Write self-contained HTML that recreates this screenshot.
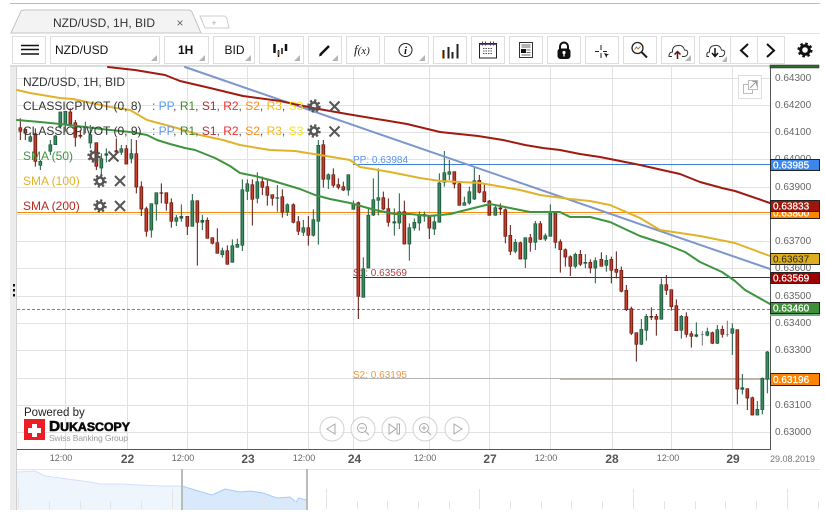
<!DOCTYPE html>
<html><head><meta charset="utf-8"><style>
html,body{margin:0;padding:0;background:#fff;overflow:hidden}
svg{display:block;font-family:"Liberation Sans",sans-serif}
</style></head><body>
<svg width="825" height="514" viewBox="0 0 825 514" xmlns="http://www.w3.org/2000/svg">
<rect width="825" height="514" fill="#fff"/>
<rect x="10" y="3" width="810" height="1" fill="#bbb"/>
<!-- tabs -->
<path d="M201 33.500H820" stroke="#e2e2e2"/>
<path d="M11 33L21 11Q22 10 25 10H188Q191 10 192 12L201 33Z" fill="#f3f3f3" stroke="#c4c4c4"/>
<path d="M200 16H224Q226 16 227 19L229 28H205Z" fill="#fff" stroke="#ccc"/>
<text x="214" y="26" font-size="9" fill="#aaa" text-anchor="middle">+</text>
<text x="53" y="27" font-size="12" fill="#333">NZD/USD, 1H, BID</text>
<text x="180" y="27" font-size="12" fill="#666" text-anchor="middle">×</text>
<!-- toolbar buttons -->
<g fill="#fff" stroke="#dedede">
<rect x="12.5" y="36.5" width="33" height="27"/><rect x="50.5" y="36.5" width="109" height="27"/><rect x="164.5" y="36.5" width="44" height="27"/><rect x="213.5" y="36.5" width="41" height="27"/><rect x="259.5" y="36.5" width="44" height="27"/><rect x="308.5" y="36.5" width="33" height="27"/><rect x="346.5" y="36.5" width="33" height="27"/><rect x="384.5" y="36.5" width="44" height="27"/><rect x="433.5" y="36.5" width="33" height="27"/><rect x="471.5" y="36.5" width="33" height="27"/><rect x="509.5" y="36.5" width="33" height="27"/><rect x="547.5" y="36.5" width="33" height="27"/><rect x="585.5" y="36.5" width="33" height="27"/><rect x="623.5" y="36.5" width="33" height="27"/><rect x="661.5" y="36.5" width="33" height="27"/><rect x="699.5" y="36.5" width="33" height="27"/><rect x="730.5" y="36.5" width="27" height="27"/><rect x="757.5" y="36.5" width="27" height="27"/>
</g>
<g fill="#b5b5b5">
<path d="M157 55v6h-6z"/><path d="M205 55v6h-6z"/><path d="M251 55v6h-6z"/><path d="M300 55v6h-6z"/><path d="M338 55v6h-6z"/><path d="M425 55v6h-6z"/><path d="M691 55v6h-6z"/><path d="M727 56v6h-5z"/>
</g>
<path d="M21 45.500H39M21 49.500H39M21 54H39" stroke="#111" stroke-width="1.600"/>
<text x="55" y="54" font-size="12" fill="#111">NZD/USD</text>
<text x="178" y="54" font-size="12" font-weight="bold" fill="#111">1H</text>
<text x="224.500" y="54" font-size="12" fill="#111">BID</text>
<!-- candle icon -->
<g stroke="#111"><path d="M274.500 44V53" stroke-width="2.500"/><path d="M278.500 50V57" stroke-width="1.500"/><path d="M278.500 51V55" stroke-width="2" stroke="#7a4a20"/><path d="M282 48V54" stroke-width="1.500"/><path d="M286 44V51" stroke-width="2.500"/></g>
<!-- pencil -->
<path d="M320 55L329 46" stroke="#111" stroke-width="2.500"/><path d="M319 56.500L320 53.500L322 55.500Z" fill="#111"/>
<text x="354" y="54" font-size="13" font-family="Liberation Serif,serif" font-style="italic" fill="#222">f<tspan font-size="11">(x)</tspan></text>
<!-- info -->
<circle cx="405.500" cy="50" r="6.500" fill="none" stroke="#222"/><text x="405.500" y="54" font-size="11" font-family="Liberation Serif,serif" font-style="italic" font-weight="bold" fill="#111" text-anchor="middle">i</text>
<!-- bars -->
<path d="M443.500 58.500V50M448.500 58.500V47M452.500 58.500V52M457.500 58.500V44" stroke="#222" stroke-width="2"/><path d="M442.500 58.500V52" stroke="#c07a20"/>
<!-- calendar -->
<rect x="479.500" y="43.500" width="17" height="14.500" fill="#fff" stroke="#222"/><path d="M480 44H496" stroke="#3a1a70" stroke-width="1.500"/><path d="M482.500 41.500v4M485.500 41.500v4M490.500 41.500v4M493.500 41.500v4" stroke="#444"/><path d="M483 48.500h10M483 51h10M483 53.500h10" stroke="#555" stroke-dasharray="1.500 1"/>
<!-- news -->
<rect x="519.500" y="42.500" width="13" height="15" fill="#fff" stroke="#333"/><path d="M521.500 45h9M521.500 47h9M526.500 50h4M526.500 52.500h4M521.500 55h9" stroke="#666"/><rect x="521" y="49" width="5" height="4" fill="#111"/>
<!-- lock -->
<path d="M560 49V46.500A4 4 0 0 1 568 46.500V49" fill="none" stroke="#111" stroke-width="2"/><rect x="557.500" y="48.500" width="13" height="10.500" rx="3" fill="#111"/><circle cx="564" cy="52.500" r="1.600" fill="#fff"/><path d="M564 53V56.500" stroke="#fff" stroke-width="1.300"/>
<!-- crosshair -->
<path d="M601 45V50M601 53V58M595 51.500H599M603 51.500H607" stroke="#222"/><path d="M604 53L609 54.500L607 55.500L606.500 58Z" fill="#222"/>
<!-- zoom chart -->
<circle cx="637.500" cy="48" r="5.500" fill="#fff" stroke="#222" stroke-width="1.300"/><path d="M634.500 49.500L636.500 47L638 49L640.500 46.500" stroke="#b5651d" fill="none" stroke-width=".9"/><path d="M641.500 52L647 57.500" stroke="#222" stroke-width="2"/>
<!-- clouds -->
<g fill="#fff" stroke="#333"><path d="M672 56.500H669Q669 52 672.500 52Q672 46 678 45.500Q683 44.500 684.500 50Q688.500 50 687.500 54Q686.500 56.500 684 56.500H682"/><path d="M709 56.500H707Q706 52 709.500 52Q709 46 715 45.500Q720 44.500 721.500 50Q725.500 50 724.500 54Q723.500 56.500 721 56.500H719"/></g>
<path d="M677.500 59V52M674.500 54.500L677.500 51.500L680.500 54.500" stroke="#601010" stroke-width="1.500" fill="none"/>
<path d="M715 48V56M712 53L715 56.500L718 53" stroke="#111" stroke-width="1.500" fill="none"/>
<!-- arrows -->
<path d="M748 44L741 50.500L748 57" fill="none" stroke="#111" stroke-width="2"/>
<path d="M767 44L774 50.500L767 57" fill="none" stroke="#111" stroke-width="2"/>
<!-- gear -->
<circle cx="805" cy="50" r="4.300" fill="none" stroke="#111" stroke-width="3"/><circle cx="805" cy="50" r="6.300" fill="none" stroke="#111" stroke-width="2.500" stroke-dasharray="2.500 2.450"/>

<!-- chart frame -->
<rect x="10" y="66" width="7" height="444" fill="#ececec"/>
<rect x="16" y="66" width="1" height="444" fill="#d0d0d0"/>
<rect x="10" y="65" width="760" height="2" fill="#dcdcdc"/>
<rect x="13" y="284" width="2" height="2.500" fill="#111"/><rect x="13" y="289" width="2" height="2.500" fill="#111"/><rect x="13" y="294" width="2" height="2.500" fill="#111"/>
<!-- grid -->
<g stroke="#e2e2e2" fill="none">
<path d="M17 78.500H770M17 105.500H770M17 132.500H770M17 159.500H770M17 187.500H770M17 214.500H770M17 241.500H770M17 268.500H770M17 296.500H770M17 323.500H770M17 350.500H770M17 378.500H770M17 405.500H770M17 432.500H770"/>
<path d="M65.500 67V449M127.500 67V449M187.500 67V449M247.500 67V449M308.500 67V449M353.500 67V449M429.500 67V449M489.500 67V449M550.500 67V449M612.500 67V449M671.500 67V449M732.500 67V449"/>
</g>
<!-- pivot lines -->
<path d="M353 164.500H770" stroke="#3f7fe0"/>
<path d="M353 277.500H770" stroke="#8c1010"/>
<path d="M353 378.500H770" stroke="#b4b4b4"/><path d="M560 379.300H770" stroke="#f0902a" stroke-width=".9"/>
<path d="M17 212.500H770" stroke="#f58a10" stroke-width="1"/>
<path d="M17 309.500H770" stroke="#5f9a78" stroke-dasharray="3 2"/>
<text x="353" y="163" font-size="10" fill="#5b95ee">PP: 0.63984</text>
<text x="353" y="276" font-size="10" fill="#b04040">S1: 0.63569</text>
<text x="353" y="378" font-size="10" fill="#ee9a40">S2: 0.63195</text>

<!-- candles: early -->
<g transform="translate(0,65) scale(.33333)" fill="none">
<path d="M61 160V225M76 190V225M106 190V305M211 130V180M226 165V245M241 195V220M289 232V315M349 220V270M379 240V298" stroke="#5e1510" stroke-width="3"/>
<path d="M61 187V200M76 192V205M106 205V290M211 140V178M226 172V218M241 210V215M289 232V305M349 256V262M379 250V298" stroke="#6e1c12" stroke-width="11"/>
<path d="M61 189V198M76 194V203M106 207V288M211 142V176M226 174V216M289 234V303M379 252V296" stroke="#c8402c" stroke-width="5"/>
<path d="M91 208V232M121 285V315M151 225V270M166 210V240M181 140V190M196 138V200M256 170V205M271 180V250M304 265V335M319 250V292M364 240V270M394 222V285" stroke="#1d5c3e" stroke-width="3"/>
<path d="M91 214V230M121 288V302M151 238V260M166 212V240M181 140V185M196 138V180M271 208V235M304 280V310M319 265V272M364 250V263M394 265V281" stroke="#1d5c3e" stroke-width="11"/>
<path d="M91 216V228M121 290V300M151 240V258M166 214V238M181 142V183M196 140V178M271 210V233M304 282V308M364 252V261M394 267V279" stroke="#3f8a63" stroke-width="5"/>
</g>
<!-- candles 131-368 -->
<g transform="translate(130,140) scale(.33333)" fill="none">
<path d="M19 0V160M34 124V228M49 200V290M94 130V190M109 157V212M124 175V263M172 228V285M202 181V377M232 232V296M247 292V313M262 265V341M292 316V374M367 118V257M397 110V165M412 120V197M427 163V197M457 148V233M490 190V250M505 228V285M535 228V317M580 0V143M610 85V143M625 115V148M640 125V153M685 185V537" stroke="#5e1510" stroke-width="3"/>
<path d="M19 40V142M34 139V208M49 205V275M94 157V161M109 157V191M124 187V245M172 228V260M202 181V248M232 240V296M247 292V311M262 307V341M292 331V374M367 133V179M397 124V143M412 139V167M427 163V176M457 169V217M490 193V248M505 244V275M535 262V287M580 13V119M610 103V137M625 133V143M640 139V151M685 187V470" stroke="#6e1c12" stroke-width="11"/>
<path d="M19 42V140M34 141V206M49 207V273M109 159V189M124 189V243M172 230V258M202 183V246M232 242V294M247 294V309M262 309V339M292 333V372M367 135V177M397 126V141M412 141V165M427 165V174M457 171V215M490 195V246M505 246V273M535 264V285M580 15V117M610 105V135M625 135V141M640 141V149M685 189V468" stroke="#c8402c" stroke-width="5"/>
<path d="M4 28V70M64 190V293M79 157V242M139 225V258M154 193V245M187 162V260M217 225V270M277 323V353M307 298V368M322 296V323M337 118V333M352 118V180M382 97V190M442 135V215M472 190V228M520 240V288M550 208V290M565 0V314M595 100V147M655 103V167M670 182V209M700 352V473M715 205V385" stroke="#1d5c3e" stroke-width="3"/>
<path d="M4 40V56M64 190V271M79 157V193M139 232V245M154 228V236M187 181V260M217 240V248M277 331V345M307 316V368M322 312V323M337 148V317M352 130V155M382 124V176M442 172V176M472 193V217M520 262V278M550 238V287M565 15V245M595 103V119M655 103V151M670 190V209M700 385V473M715 225V385" stroke="#1d5c3e" stroke-width="11"/>
<path d="M4 42V54M64 192V269M79 159V191M139 234V243M187 183V258M277 333V343M307 318V366M322 314V321M337 150V315M352 132V153M382 126V174M472 195V215M520 264V276M550 240V285M565 17V243M595 105V117M655 105V149M670 192V207M700 387V471M715 227V383" stroke="#3f8a63" stroke-width="5"/>
</g>
<!-- candles 373-570 -->
<g transform="translate(360,140) scale(.33333)" fill="none">
<path d="M70 155V210M85 175V260M133 182V313M208 226V297M283 94V145M298 125V197M358 105V160M373 132V188M388 180V227M421 190V225M436 205V310M451 255V345M481 305V358M511 282V335M541 243V300M586 216V325M601 298V398M616 325V380M631 346V408" stroke="#5e1510" stroke-width="3"/>
<path d="M70 172V208M85 205V248M133 214V313M208 226V265M283 94V133M298 130V197M358 120V158M373 154V186M388 182V227M421 203V208M436 208V290M451 285V335M481 307V358M511 292V308M541 250V299M586 216V308M601 304V330M616 328V352M631 349V380" stroke="#6e1c12" stroke-width="11"/>
<path d="M70 174V206M85 207V246M133 216V311M208 228V263M283 96V131M298 132V195M358 122V156M373 156V184M388 184V225M436 210V288M451 287V333M481 309V356M511 294V306M541 252V297M586 218V306M601 306V328M616 330V350M631 351V378" stroke="#c8402c" stroke-width="5"/>
<path d="M40 115V228M55 85V226M103 205V287M118 160V267M148 250V362M163 235V272M178 215V272M193 215V245M223 226V285M238 100V248M253 33V140M268 60V120M313 170V197M328 140V194M343 82V180M406 198V227M466 297V340M496 292V384M526 243V330M556 280V303M571 193V290" stroke="#1d5c3e" stroke-width="3"/>
<path d="M40 178V226M55 172V182M103 244V250M118 214V250M148 262V313M163 246V265M178 225V250M193 222V230M223 244V268M238 128V248M253 97V128M268 94V104M313 187V197M328 154V190M343 121V178M406 202V227M466 306V335M496 292V358M526 250V308M556 286V298M571 216V290" stroke="#1d5c3e" stroke-width="11"/>
<path d="M40 180V224M55 174V180M118 216V248M148 264V311M163 248V263M178 227V248M223 246V266M238 130V246M253 99V126M268 96V102M313 189V195M328 156V188M343 123V176M406 204V225M466 308V333M496 294V356M526 252V306M556 288V296M571 218V288" stroke="#3f8a63" stroke-width="5"/>
</g>
<!-- candles 575-767 -->
<g transform="translate(560,230) scale(.33333)" fill="none">
<path d="M61 60V108M91 88V130M124 67V110M154 80V160M169 64V145M184 110V187M199 165V243M214 230V315M229 307V395M274 232V270M289 252V317M319 135V195M334 178V242M349 208V303M379 247V322M394 303V353M457 305V342M487 287V323M532 298V523M562 475V540M577 500V556" stroke="#5e1510" stroke-width="3"/>
<path d="M61 72V104M91 96V115M124 87V110M154 87V122M169 117V128M184 120V185M199 180V240M214 235V311M229 307V344M274 258V263M289 258V269M319 163V182M334 178V231M349 226V303M379 259V314M394 310V320M457 307V341M487 297V314M532 298V478M562 475V505M577 502V556" stroke="#6e1c12" stroke-width="11"/>
<path d="M61 74V102M91 98V113M124 89V108M154 89V120M169 119V126M184 122V183M199 182V238M214 237V309M229 309V342M289 260V267M319 165V180M334 180V229M349 228V301M379 261V312M394 312V318M457 309V339M487 299V312M532 300V476M562 477V503M577 504V554" stroke="#c8402c" stroke-width="5"/>
<path d="M46 68V115M76 72V115M106 82V160M139 75V125M244 267V345M259 252V332M304 145V269M364 255V326M409 277V322M442 293V319M472 285V342M517 280V375M547 432V493M592 513V556M607 442V553M622 363V490" stroke="#1d5c3e" stroke-width="3"/>
<path d="M46 72V110M76 96V101M106 91V115M139 90V107M244 297V344M259 258V302M304 163V269M364 258V302M409 313V320M442 304V317M472 298V341M517 295V311M547 472V479M592 537V556M607 444V540M622 365V448" stroke="#1d5c3e" stroke-width="11"/>
<path d="M46 74V108M106 93V113M139 92V105M244 299V342M259 260V300M304 165V267M364 260V300M442 306V315M472 300V339M517 297V309M592 539V554M607 446V538M622 367V446" stroke="#3f8a63" stroke-width="5"/>
<path d="M427 303V347M502 272V320" stroke="#777" stroke-width="3"/>
<path d="M427 312V314M502 313V315" stroke="#666" stroke-width="9"/>
</g>
<!-- MAs -->
<g fill="none" stroke-linejoin="round" stroke-linecap="round">
<path d="M185 67L770 269" stroke="#7d96cc" stroke-width="2"/>
<path d="M108 67L135 70L165 75L180 81L210 88L243 96L280 101L313 108L347 114L407 124L440 132L478 136L503 140L525 145L543 148L560 150L580 154L600 157L640 165L680 174L700 182L722 188L735 191L770 203" stroke="#a01a10" stroke-width="2"/>
<path d="M17 90L30 93L60 98L73 99L110 107L130 110L147 120L177 128L200 135L223 140L240 145L270 150L295 151L320 155L350 160L360 167L390 172L420 178L440 181L480 183L520 190L540 195L570 199L590 201L610 205L640 218L660 230L700 236L720 240L735 243L770 256" stroke="#e0b32a" stroke-width="2"/>
<path d="M17 120L40 122L60 124L85 127L110 130L130 132L147 135L157 140L170 144L185 148L195 150L215 158L230 166L240 173L255 176L270 180L290 186L300 189L315 195L330 199L350 203L375 210L395 214L410 214L430 216L450 214L470 209L490 204L510 208L530 212L560 212L570 217L590 217L610 222L627 230L640 236L665 244L685 252L700 262L722 272L735 281L745 290L770 304" stroke="#3f9440" stroke-width="2"/>
</g>
<!-- axes -->
<path d="M17 449.500H770.500" stroke="#555"/>
<path d="M770.500 66V450" stroke="#555"/>
<g font-size="10" fill="#666">
<text x="775" y="81">0.64300</text><text x="775" y="108">0.64200</text><text x="775" y="135">0.64100</text><text x="775" y="162">0.64000</text><text x="775" y="190">0.63900</text><text x="775" y="244">0.63700</text><text x="775" y="271">0.63600</text><text x="775" y="299">0.63500</text><text x="775" y="326">0.63400</text><text x="775" y="353">0.63300</text><text x="775" y="408">0.63100</text><text x="775" y="435">0.63000</text>
</g>
<rect x="770" y="65" width="49" height="3" fill="#2e6e2a" stroke="#222" stroke-width=".5"/>
<g font-size="10" stroke="#222">
<rect x="770.500" y="159.500" width="49" height="11" fill="#3a87ee"/><text x="773" y="168.500" fill="#fff" stroke="#fff" stroke-width=".25">0.63985</text>
<rect x="770.500" y="207.500" width="49" height="11" fill="#ff8400"/><text x="773" y="216.500" fill="#fff" stroke="#fff" stroke-width=".25">0.63800</text>
<rect x="770.500" y="200.500" width="49" height="11" fill="#9c170b"/><text x="773" y="209.500" fill="#fff" stroke="#fff" stroke-width=".25">0.63833</text>
<rect x="770.500" y="253.500" width="49" height="11" fill="#dcae1d"/><text x="773" y="262.500" fill="#222" stroke="none">0.63637</text>
<rect x="770.500" y="272.500" width="49" height="11" fill="#a00000"/><text x="773" y="281.500" fill="#fff" stroke="#fff" stroke-width=".25">0.63569</text>
<rect x="770" y="313" width="50" height="3" fill="#6faa85" stroke="none"/>
<rect x="770.500" y="302.500" width="49" height="11" fill="#3f8f38"/><text x="773" y="311.500" fill="#fff" stroke="#fff" stroke-width=".25">0.63460</text>
<rect x="770.500" y="373.500" width="49" height="12" fill="#ff8400"/><text x="773" y="383" fill="#fff" stroke="#fff" stroke-width=".25">0.63196</text>
</g>
<!-- popout -->
<rect x="738.500" y="75.500" width="23" height="23" fill="#fff" stroke="#ddd"/>
<rect x="743.500" y="84.500" width="9" height="9" fill="none" stroke="#bbb"/><rect x="748.500" y="80.500" width="9" height="9" fill="#fff" stroke="#bbb"/><path d="M750 88L756 82M752.500 81.500H756.500V85.500" fill="none" stroke="#999"/>
<!-- legend -->
<g font-size="12" fill="#333">
<text x="23" y="86">NZD/USD, 1H, BID</text>
<text x="23" y="110">CLASSICPIVOT (0, 8)</text>
<text x="23" y="135">CLASSICPIVOT (0, 9)</text>
<text x="152" y="110" fill="#555">: <tspan fill="#5b9bf5">PP</tspan>, <tspan fill="#3a8a2a">R1</tspan>, <tspan fill="#b03030">S1</tspan>, <tspan fill="#f03030">R2</tspan>, <tspan fill="#ff8c1a">S2</tspan>, <tspan fill="#f5b81e">R3</tspan>, <tspan fill="#fbe600">S3</tspan></text>
<text x="152" y="135" fill="#555">: <tspan fill="#5b9bf5">PP</tspan>, <tspan fill="#3a8a2a">R1</tspan>, <tspan fill="#b03030">S1</tspan>, <tspan fill="#f03030">R2</tspan>, <tspan fill="#ff8c1a">S2</tspan>, <tspan fill="#f5b81e">R3</tspan>, <tspan fill="#fbe600">S3</tspan></text>
<text x="23" y="160" fill="#3f9440">SMA (50)</text>
<text x="23" y="185" fill="#e0b32a">SMA (100)</text>
<text x="23" y="210" fill="#b52a20">SMA (200)</text>
</g>
<g fill="none" stroke="#555">
<circle cx="314" cy="106" r="3.500" stroke-width="2.600"/><circle cx="314" cy="106" r="5.600" stroke-width="2.200" stroke-dasharray="2.200 2.200"/>
<circle cx="314" cy="131" r="3.500" stroke-width="2.600"/><circle cx="314" cy="131" r="5.600" stroke-width="2.200" stroke-dasharray="2.200 2.200"/>
<circle cx="94" cy="156" r="3.500" stroke-width="2.600"/><circle cx="94" cy="156" r="5.600" stroke-width="2.200" stroke-dasharray="2.200 2.200"/>
<circle cx="100" cy="181" r="3.500" stroke-width="2.600"/><circle cx="100" cy="181" r="5.600" stroke-width="2.200" stroke-dasharray="2.200 2.200"/>
<circle cx="100" cy="206" r="3.500" stroke-width="2.600"/><circle cx="100" cy="206" r="5.600" stroke-width="2.200" stroke-dasharray="2.200 2.200"/>
<path stroke-width="2" d="M329.500 101.500l10 10M339.500 101.500l-10 10M329.500 126.500l10 10M339.500 126.500l-10 10M108.500 151.500l10 10M118.500 151.500l-10 10M115 176l10 10M125 176l-10 10M115 201l10 10M125 201l-10 10"/>
</g>
<!-- logo -->
<text x="24" y="416" font-size="11.500" fill="#222">Powered by</text>
<rect x="24" y="419" width="21" height="21" fill="#ee1c25"/>
<path d="M32 424h5v4h4v5h-4v4h-5v-4h-4v-5h4z" fill="#fff"/>
<text x="49" y="431" font-size="12" font-weight="bold" fill="#0a0a0a" stroke="#0a0a0a" stroke-width=".6" textLength="81" lengthAdjust="spacingAndGlyphs"><tspan font-size="15">D</tspan>UKASCOPY</text>
<text x="49" y="441" font-size="8.500" fill="#999" textLength="79">Swiss Banking Group</text>
<!-- nav -->
<g fill="#fff" fill-opacity=".6" stroke="#d2d2d2">
<circle cx="332" cy="429" r="12"/><circle cx="363" cy="429" r="12"/><circle cx="394" cy="429" r="12"/><circle cx="425" cy="429" r="12"/><circle cx="457" cy="429" r="12"/>
</g>
<g fill="none" stroke="#aaa">
<path d="M335 424V434L327 429Z"/><path d="M454 424V434L462 429Z"/>
<circle cx="362" cy="428" r="4.500"/><path d="M359.500 428H364.500M365.500 431.500L369 435"/>
<circle cx="424" cy="428" r="4.500"/><path d="M421.500 428H426.500M424 425.500V430.500M427.500 431.500L431 435"/>
<path d="M389 424V434L396 429Z"/><rect x="397" y="424" width="2.500" height="10"/>
</g>
<!-- date axis -->
<g font-size="9" fill="#666" text-anchor="middle">
<text x="61" y="461">12:00</text><text x="183" y="461">12:00</text><text x="304" y="461">12:00</text><text x="425" y="461">12:00</text><text x="546" y="461">12:00</text><text x="668" y="461">12:00</text>
</g>
<g font-size="12" font-weight="bold" fill="#555" text-anchor="middle">
<text x="127.500" y="463">22</text><text x="248" y="463">23</text><text x="354.500" y="463">24</text><text x="490" y="463">27</text><text x="612" y="463">28</text><text x="733" y="463">29</text>
</g>
<text x="770" y="462" font-size="9" fill="#777">29.08.2019</text>
<!-- overview -->
<path d="M17 469.500H820" stroke="#e4e4e4"/>
<path d="M17 472L35 471L45 476L60 478L75 480L90 482L100 484L120 484L140 485L160 486L181 486V510H17Z" fill="#eef5fd"/>
<path d="M182 486L195 490L212 495L225 489L240 492L250 491L263 493L277 498L290 497L296 502L299 498L306 500V510H182Z" fill="#d9e9fc"/>
<path d="M17 472L35 471L45 476L60 478L75 480L90 482L100 484L120 484L140 485L160 486L181 486" fill="none" stroke="#cfe2fb"/>
<path d="M182 486L195 490L212 495L225 489L240 492L250 491L263 493L277 498L290 497L296 502L299 498L306 500" fill="none" stroke="#a8cbf8"/>
<path d="M18.500 489V509M172.500 489V509M326.500 489V509M479.500 489V509M633.500 489V509M787.500 489V509" stroke="#e4e4e4"/>
<path d="M49.500 501V509M80.500 501V509M110.500 501V509M141.500 501V509M203.500 501V509M233.500 501V509M264.500 501V509M295.500 501V509M357.500 501V509M387.500 501V509M418.500 501V509M449.500 501V509M510.500 501V509M541.500 501V509M571.500 501V509M602.500 501V509M664.500 501V509M695.500 501V509M725.500 501V509M756.500 501V509M818.500 501V509" stroke="#e4e4e4"/>
<rect x="181" y="469" width="2" height="41" fill="#bbb"/>
<rect x="306" y="469" width="2" height="41" fill="#bbb"/>
</svg>
</body></html>
